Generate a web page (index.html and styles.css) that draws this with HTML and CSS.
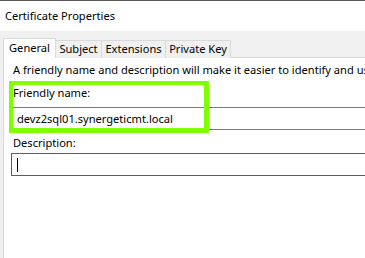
FILE: index.html
```html
<!DOCTYPE html>
<html>
<head>
<meta charset="utf-8">
<link rel="stylesheet" href="styles.css">
</head>
<body>
<div class="window">
  <div class="titlebar">Certificate Properties</div>
  <div class="body">
    <div class="tabs">
      <div class="tab tab-active tab-general">General</div>
      <div class="tab tab-subject">Subject</div>
      <div class="tab tab-ext">Extensions</div>
      <div class="tab tab-key">Private Key</div>
    </div>
    <div class="panel">
      <div class="intro">A friendly name and description will make it easier to identify and use this certificate.</div>
      <div class="label label-friendly">Friendly name:</div>
      <div class="textbox">devz2sql01.synergeticmt.local</div>
      <div class="label label-desc">Description:</div>
      <div class="textbox textbox-focus"><span class="caret"></span></div>
    </div>
  </div>
  <div class="highlight"></div>
</div>
</body>
</html>
```
FILE: styles.css
```css
html, body {
  margin: 0;
  padding: 0;
}
body {
  width: 365px;
  height: 258px;
  overflow: hidden;
  background: #f0f0f0;
  font-family: "Noto Sans", "Open Sans", sans-serif;
  font-size: 11.1px;
  color: #000;
}
.window {
  position: relative;
  height: 258px;
  display: flex;
  flex-direction: column;
}
.titlebar {
  height: 30px;
  border-top: 1px solid #595959;
  background: #fff;
  padding-left: 5px;
  line-height: 30px;
  white-space: nowrap;
}
.body {
  flex: 1;
  display: flex;
  flex-direction: column;
  padding: 7px 0 0 3px;
}
.tabs {
  display: flex;
  align-items: flex-end;
  height: 20px;
  position: relative;
  z-index: 1;
}
.tab {
  box-sizing: border-box;
  height: 18px;
  border: 1px solid #d9d9d9;
  border-bottom: none;
  background: #f0f0f0;
  line-height: 16px;
  text-align: center;
  white-space: nowrap;
  margin-left: -1px;
}
.tab-active {
  height: 20px;
  background: #fff;
  margin-left: 0;
  line-height: 18px;
}
.tab-general { width: 53px; }
.tab-subject { width: 47px; }
.tab-ext { width: 65px; }
.tab-key { width: 66px; }
.panel {
  flex: 1;
  margin-top: -1px;
  background: #fff;
  border-top: 1px solid #d9d9d9;
  border-left: 1px solid #d9d9d9;
  padding: 4px 0 0 7px;
  display: flex;
  flex-direction: column;
}
.intro {
  padding-left: 2px;
  line-height: 16px;
  white-space: nowrap;
  overflow: hidden;
}
.label {
  padding-left: 2px;
  line-height: 16px;
  white-space: nowrap;
}
.label-friendly { margin-top: 7px; }
.label-desc { margin-top: 5px; }
.textbox {
  box-sizing: border-box;
  height: 23px;
  margin-top: 6px;
  border: 1px solid #7a7a7a;
  border-right: none;
  padding-left: 5px;
  line-height: 20px;
  white-space: nowrap;
  display: flex;
  align-items: center;
}
.textbox-focus {
  margin-top: 2px;
  border-color: #0b6ce8;
}
.caret {
  display: block;
  width: 1px;
  height: 14px;
  background: #000;
}
.highlight {
  position: absolute;
  left: 9px;
  top: 81px;
  width: 191px;
  height: 43px;
  border-style: solid;
  border-color: #80ff00;
  border-width: 4px 5px 5px 4px;
  z-index: 2;
}
```
